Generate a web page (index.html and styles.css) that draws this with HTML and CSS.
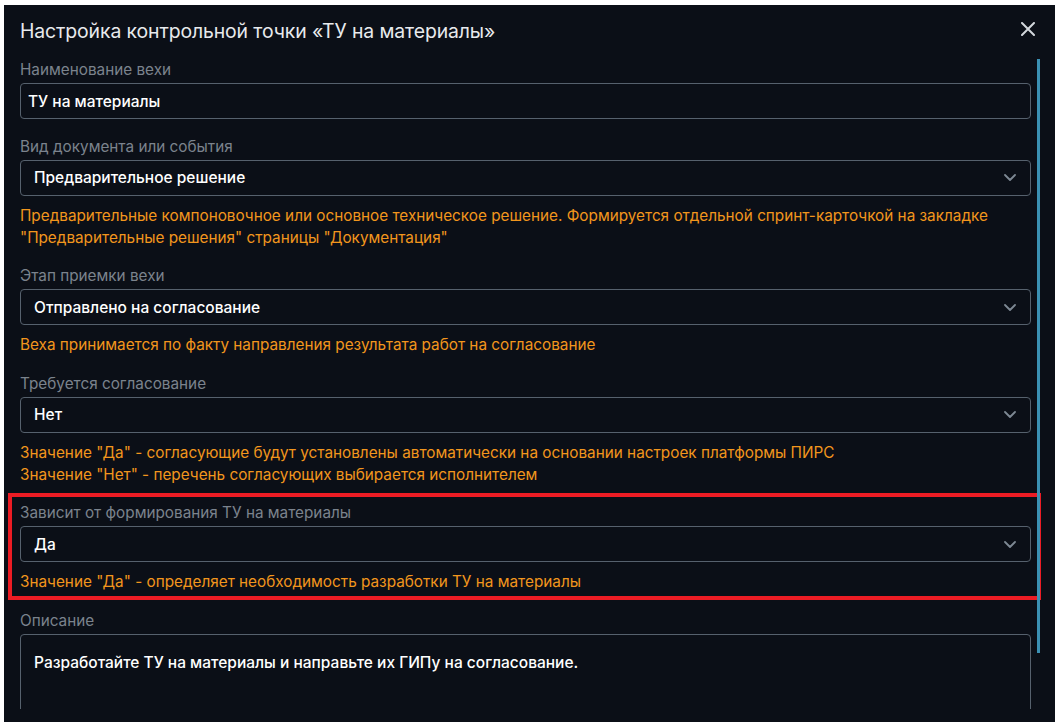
FILE: index.html
```html
<!DOCTYPE html>
<html lang="ru">
<head>
<meta charset="utf-8">
<title>Настройка контрольной точки</title>
<link rel="stylesheet" href="styles.css">
</head>
<body>
<div class="dialog">
  <div class="header">
    <div class="title">Настройка контрольной точки «ТУ на материалы»</div>
    <div class="close">
      <svg width="14" height="14" viewBox="0 0 14 14"><path d="M1 1 L13 13 M13 1 L1 13" stroke="#d3d7dc" stroke-width="2" stroke-linecap="round"/></svg>
    </div>
  </div>
  <div class="content">
    <div class="field">
      <div class="label">Наименование вехи</div>
      <div class="box input">ТУ на материалы</div>
    </div>
    <div class="field">
      <div class="label">Вид документа или события</div>
      <div class="box select"><span>Предварительное решение</span><svg class="chev" width="12" height="7" viewBox="0 0 12 7"><path d="M1 1 L6 6 L11 1" fill="none" stroke="#7d8893" stroke-width="1.8" stroke-linecap="round" stroke-linejoin="round"/></svg></div>
      <div class="hint">Предварительные компоновочное или основное техническое решение. Формируется отдельной спринт-карточкой на закладке<br>"Предварительные решения" страницы "Документация"</div>
    </div>
    <div class="field">
      <div class="label">Этап приемки вехи</div>
      <div class="box select"><span>Отправлено на согласование</span><svg class="chev" width="12" height="7" viewBox="0 0 12 7"><path d="M1 1 L6 6 L11 1" fill="none" stroke="#7d8893" stroke-width="1.8" stroke-linecap="round" stroke-linejoin="round"/></svg></div>
      <div class="hint">Веха принимается по факту направления результата работ на согласование</div>
    </div>
    <div class="field">
      <div class="label">Требуется согласование</div>
      <div class="box select"><span>Нет</span><svg class="chev" width="12" height="7" viewBox="0 0 12 7"><path d="M1 1 L6 6 L11 1" fill="none" stroke="#7d8893" stroke-width="1.8" stroke-linecap="round" stroke-linejoin="round"/></svg></div>
      <div class="hint">Значение "Да" - согласующие будут установлены автоматически на основании настроек платформы ПИРС<br>Значение "Нет" - перечень согласующих выбирается исполнителем</div>
    </div>
    <div class="field highlight">
      <div class="label">Зависит от формирования ТУ на материалы</div>
      <div class="box select"><span>Да</span><svg class="chev" width="12" height="7" viewBox="0 0 12 7"><path d="M1 1 L6 6 L11 1" fill="none" stroke="#7d8893" stroke-width="1.8" stroke-linecap="round" stroke-linejoin="round"/></svg></div>
      <div class="hint">Значение "Да" - определяет необходимость разработки ТУ на материалы</div>
    </div>
    <div class="field">
      <div class="label">Описание</div>
      <div class="box textarea">Разработайте ТУ на материалы и направьте их ГИПу на согласование.</div>
    </div>
  </div>
  <div class="scrollbar"></div>
</div>
</body>
</html>
```

FILE: styles.css
```css
* { box-sizing: border-box; }
html, body { margin: 0; padding: 0; background: #ffffff; }
body {
  font-family: Inter, "Noto Sans", "DejaVu Sans", sans-serif;
  width: 1060px;
  height: 726px;
  overflow: hidden;
}
.dialog {
  position: relative;
  margin: 5px 5px 0 4px;
  width: 1051px;
  height: 717px;
  background: #0b0f17;
  padding-bottom: 13px;
  overflow: hidden;
}
.header {
  height: 52px;
  display: flex;
  align-items: center;
  justify-content: space-between;
  padding: 2px 20px 2px 16px;
}
.title {
  color: #e8eaed;
  font-size: 19.4px;
  font-weight: 400;
  letter-spacing: -0.1px;
}
.close {
  width: 14px;
  height: 14px;
  display: flex;
  margin-bottom: 4px;
}
.content {
  height: 652px;
  overflow: hidden;
  padding: 3px 24px 0 16px;
  display: flex;
  flex-direction: column;
  gap: 17.5px;
}
.field {
  display: flex;
  flex-direction: column;
  position: relative;
}
.label {
  color: #7b838d;
  font-size: 15.3px;
  line-height: 20px;
  margin-bottom: 3px;
}
.box {
  height: 36px;
  border: 1px solid #56616d;
  border-radius: 4px;
  color: #ffffff;
  font-size: 15.5px;
  font-weight: 500;
  display: flex;
  align-items: center;
  flex-shrink: 0;
}
.input { padding-left: 7px; }
.select {
  padding: 0 14px 0 13px;
  justify-content: space-between;
}
.chev { display: block; }
.textarea {
  height: 120px;
  align-items: flex-start;
  padding: 17px 13px;
  line-height: 22px;
}
.hint {
  color: #f2961d;
  font-size: 15.3px;
  line-height: 22px;
  margin-top: 9px;
}
.highlight::after {
  content: "";
  position: absolute;
  top: -10px;
  left: -12px;
  right: -10px;
  bottom: -7px;
  border: 4.5px solid #ec1c24;
  pointer-events: none;
}
.scrollbar {
  position: absolute;
  top: 54px;
  left: 1033px;
  width: 3px;
  height: 594px;
  background: #3b90b3;
}
```
